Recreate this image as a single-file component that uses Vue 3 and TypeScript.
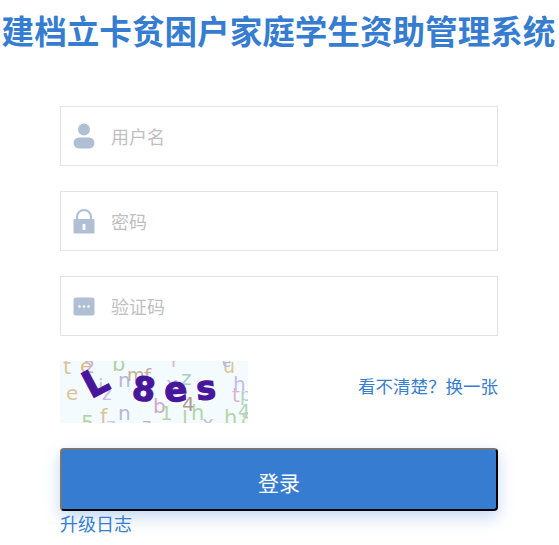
<script setup lang="ts">
import { ref } from 'vue'

const username = ref('')
const password = ref('')
const code = ref('')

// 验证码干扰字符 [字符, x, y, 字号, 颜色]
type Noise = [string, number, number, number, string]
const noise: Noise[] = [
  ['t', 3, 13, 21, '#d9c59a'],
  ['e', 20, 12, 20, '#d8b98c'],
  ['2', 24, 12, 17, '#c3b3d8'],
  ['b', 52, 10, 21, '#b5cfa8'],
  ['e', 6, 39, 20, '#dcc39a'],
  ['i', 38, 32, 20, '#b5d1c4'],
  ['z', 42, 39, 18, '#c9b8e6'],
  ['n', 58, 26, 20, '#b6b6dc'],
  ['m', 67, 20, 18, '#c4b09c'],
  ['f', 84, 22, 20, '#c4b09c'],
  ['i', 111, 6, 18, '#e0b0d0'],
  ['x', 106, 30, 20, '#c3bce8'],
  ['z', 121, 24, 20, '#a8cfc0'],
  ['b', 93, 52, 20, '#d0a8c8'],
  ['1', 100, 59, 20, '#b5d4a8'],
  ['4', 122, 50, 20, '#b09c94'],
  ['J', 122, 63, 20, '#b5d4a8'],
  ['h', 131, 59, 21, '#b5d4a8'],
  ['5', 21, 70, 21, '#b5d4a8'],
  ['f', 40, 63, 21, '#dcc39a'],
  ['z', 46, 70, 18, '#c3d0e4'],
  ['n', 58, 59, 20, '#b6b6dc'],
  ['z', 82, 70, 17, '#b8b8c8'],
  ['x', 142, 69, 20, '#c3bce8'],
  ['h', 164, 64, 21, '#b5d4a8'],
  ['u', 163, 12, 19, '#dcc39a'],
  ['e', 162, 6, 15, '#b6b6dc'],
  ['h', 173, 30, 20, '#c3bce8'],
  ['t', 172, 41, 20, '#e0b0d0'],
  ['p', 180, 40, 18, '#b5d1c4'],
  ['4', 178, 57, 19, '#b5d1c4'],
  ['8', 181, 64, 18, '#b5d4a8']
]
</script>

<template>
  <div class="page">
    <h1 class="title">建档立卡贫困户家庭学生资助管理系统</h1>
    <form class="form" @submit.prevent>
      <label class="field">
        <svg class="ico" viewBox="0 0 22 26" width="22" height="26">
          <circle cx="11" cy="6.500" r="6" fill="#b0bfd3" />
          <rect x="0.500" y="14.500" width="21" height="11" rx="5.500" fill="#b0bfd3" />
        </svg>
        <input v-model="username" class="inp" type="text" placeholder="用户名" />
      </label>
      <label class="field">
        <svg class="ico" viewBox="0 0 22 26" width="22" height="26">
          <path d="M4 12V9a7 7 0 0 1 14 0v3" fill="none" stroke="#b0bfd3" stroke-width="2" />
          <path d="M1.500 11h19a1 1 0 0 1 1 1v12.500a1 1 0 0 1-1 1h-19a1 1 0 0 1-1-1V12a1 1 0 0 1 1-1z" fill="#b0bfd3" />
          <rect x="9.500" y="16" width="3" height="6" rx="1" fill="#fff" />
        </svg>
        <input v-model="password" class="inp" type="password" placeholder="密码" />
      </label>
      <label class="field">
        <svg class="ico" viewBox="0 0 22 26" width="22" height="26">
          <rect x="0.500" y="4.500" width="21" height="18" rx="2.500" fill="#b0bfd3" />
          <circle cx="6.500" cy="13.500" r="1.200" fill="#fff" />
          <circle cx="11" cy="13.500" r="1.200" fill="#fff" />
          <circle cx="15.500" cy="13.500" r="1.200" fill="#fff" />
        </svg>
        <input v-model="code" class="inp" type="text" placeholder="验证码" />
      </label>

      <div class="captcha-row">
        <svg class="captcha" viewBox="0 0 188 62" width="188" height="62">
          <rect width="188" height="62" fill="#f4fbff" />
          <text
            v-for="(n, i) in noise"
            :key="i"
            :x="n[1]"
            :y="n[2]"
            :font-size="n[3]"
            :fill="n[4]"
            font-family="'DejaVu Sans', sans-serif"
          >{{ n[0] }}</text>
          <g fill="#47169a" stroke="#47169a" stroke-width="1.200" font-family="'DejaVu Sans', sans-serif" font-weight="700">
            <text transform="translate(31 38) rotate(-28)" font-size="37">L</text>
            <text transform="translate(71 38) rotate(8)" font-size="33">8</text>
            <text transform="translate(105 41) rotate(-4)" font-size="34">e</text>
            <text transform="translate(137 39) rotate(-4)" font-size="33">s</text>
          </g>
        </svg>
        <a class="link swap" href="#" @click.prevent>看不清楚？换一张</a>
      </div>

      <button class="submit" type="submit">登录</button>
    </form>
    <a class="link log" href="#" @click.prevent>升级日志</a>
  </div>
</template>

<style>
html, body { margin: 0; background: #fff; }
</style>

<style scoped>
.page { width: 559px; height: 545px; overflow: hidden; font-family: "Liberation Sans", "Noto Sans CJK SC", sans-serif; }
.title { margin: 0; padding: 13px 2px 0 0; height: 40px; line-height: 40px; font-size: 32.600px; font-weight: 700; color: #367dd1; text-align: center; white-space: nowrap; }
.form { display: flex; flex-direction: column; gap: 25px; margin: 53px 61px 0 60px; }
.field { display: flex; align-items: center; height: 60px; box-sizing: border-box; border: 1px solid #e2e3ea; padding-left: 12px; gap: 16px; }
.ico { flex: none; }
.inp { flex: 1; min-width: 0; border: none; outline: none; padding: 4px 0 0; background: transparent; font: 18px "Liberation Sans", "Noto Sans CJK SC", sans-serif; color: #333; }
.inp::placeholder { color: #bfbfbf; opacity: 1; }
.captcha-row { display: flex; align-items: center; justify-content: space-between; height: 62px; }
.captcha { display: block; }
.link { color: #367dd1; text-decoration: none; font-size: 18px; }
.swap { font-size: 17.500px; line-height: 26px; margin-bottom: 10px; }
.submit { height: 63px; padding: 5px 0 0; border-width: 2px; border-style: outset; border-color: #767676 #1f1f1f #1f1f1f #767676; border-radius: 4px; background: #367dd1; color: #fff; font: 21px "Liberation Sans", "Noto Sans CJK SC", sans-serif; box-shadow: 0 6px 16px rgba(54, 125, 209, .3); cursor: pointer; }
.log { display: block; margin: 1px 0 0 60px; line-height: 26px; }
</style>
